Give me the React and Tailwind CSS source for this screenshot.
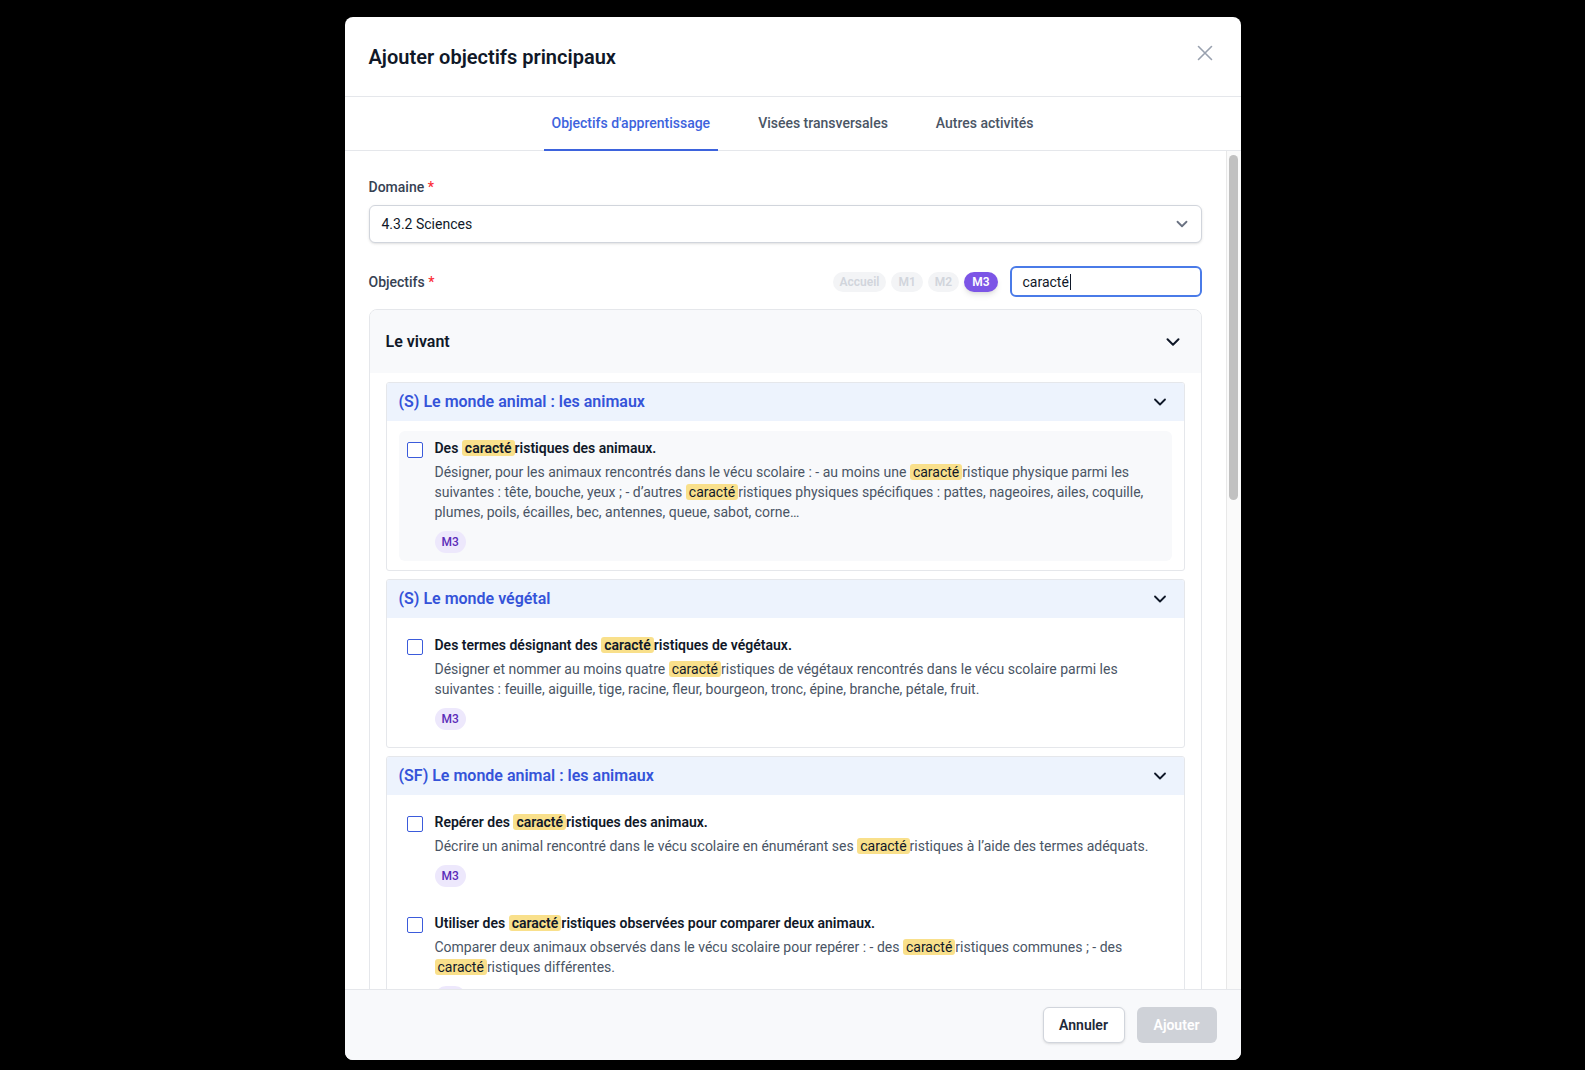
import { ChevronDown } from "lucide-react";

const SECTIONS = [
  {
    title: "(S) Le monde animal : les animaux",
    items: [
      {
        title: "Des caracté ristiques des animaux.",
        desc: "Désigner, pour les animaux rencontrés dans le vécu scolaire : - au moins une caracté ristique physique parmi les suivantes : tête, bouche, yeux ; - d’autres caracté ristiques physiques spécifiques : pattes, nageoires, ailes, coquille, plumes, poils, écailles, bec, antennes, queue, sabot, corne…",
        hover: true,
      },
    ],
  },
  {
    title: "(S) Le monde végétal",
    items: [
      {
        title: "Des termes désignant des caracté ristiques de végétaux.",
        desc: "Désigner et nommer au moins quatre caracté ristiques de végétaux rencontrés dans le vécu scolaire parmi les suivantes : feuille, aiguille, tige, racine, fleur, bourgeon, tronc, épine, branche, pétale, fruit.",
      },
    ],
  },
  {
    title: "(SF) Le monde animal : les animaux",
    items: [
      {
        title: "Repérer des caracté ristiques des animaux.",
        desc: "Décrire un animal rencontré dans le vécu scolaire en énumérant ses caracté ristiques à l’aide des termes adéquats.",
      },
      {
        title: "Utiliser des caracté ristiques observées pour comparer deux animaux.",
        desc: "Comparer deux animaux observés dans le vécu scolaire pour repérer : - des caracté ristiques communes ; - des caracté ristiques différentes.",
      },
    ],
  },
];

const LEVELS = ["Accueil", "M1", "M2", "M3"];

// splits on the search term and wraps each hit in a mark
function Highlighted({ text }) {
  const parts = text.split("caracté ");
  return parts.map((part, i) => (
    <span key={i}>
      {i > 0 ? (
        <mark className="rounded-[3px] bg-[#f9e08b] px-[3px] text-gray-900">caracté</mark>
      ) : null}
      {part}
    </span>
  ));
}

function Objective({ title, desc, hover }) {
  return (
    <div className={`flex gap-3 rounded-md px-2 pb-2 pt-[7px] ${hover ? "bg-[#f8f9fb]" : ""}`}>
      <span className="mt-1 h-4 w-4 shrink-0 rounded-[2px] border-[1.5px] border-[#3b5bdb] bg-white" />
      <div className="min-w-0 flex-1">
        <p className="text-sm font-semibold leading-5 text-gray-900">
          <Highlighted text={title} />
        </p>
        <p className="mt-1 text-sm leading-5 text-gray-600">
          <Highlighted text={desc} />
        </p>
        <div className="mt-[7px]">
          <span className="inline-flex h-[22px] items-center rounded-full bg-[#ede8fc] px-[7px] text-xs font-medium text-[#5b2bb8]">
            M3
          </span>
        </div>
      </div>
    </div>
  );
}

function Section({ title, items }) {
  return (
    <div className="overflow-hidden rounded-[3px] border border-gray-200 bg-white">
      <div className="flex h-[38px] items-center justify-between bg-[#edf3fd] pl-3 pr-[14px]">
        <span className="text-base font-semibold text-[#3553d9]">{title}</span>
        <ChevronDown size={20} strokeWidth={2.2} className="text-gray-900" />
      </div>
      <div className="space-y-[11px] px-3 pb-[9px] pt-2.5">
        {items.map((item, i) => (
          <Objective key={i} {...item} />
        ))}
      </div>
    </div>
  );
}

export default function App() {
  return (
    <div className="flex h-[1070px] w-full justify-center overflow-hidden bg-black font-[family-name:Roboto,'Noto_Sans',sans-serif]">
      <div className="mt-[17px] flex h-[1043px] w-[896px] flex-col overflow-hidden rounded-lg bg-white">
        <div className="flex h-[80px] shrink-0 items-center justify-between border-b border-gray-200 px-6">
          <h2 className="text-xl font-semibold text-gray-900">Ajouter objectifs principaux</h2>
          <button type="button" className="-mt-2 p-1 text-gray-400">
            <svg width="16" height="16" viewBox="0 0 16 16" fill="none" stroke="currentColor" strokeWidth="1.6" strokeLinecap="round">
              <path d="M1.5 1.5l13 13M14.5 1.5l-13 13" />
            </svg>
          </button>
        </div>

        <div className="flex h-[54px] shrink-0 justify-center gap-8 border-b border-gray-200">
          <button type="button" className="-mb-px border-b-2 border-[#3d63dd] px-2 text-sm font-medium text-[#3d63dd]">
            Objectifs d'apprentissage
          </button>
          <button type="button" className="-mb-px border-b-2 border-transparent px-2 text-sm font-medium text-gray-600">
            Visées transversales
          </button>
          <button type="button" className="-mb-px border-b-2 border-transparent px-2 text-sm font-medium text-gray-600">
            Autres activités
          </button>
        </div>

        <div className="flex min-h-0 flex-1">
          <div className="min-w-0 flex-1 overflow-hidden px-6 pt-[26px]">
            <label className="block text-sm font-medium leading-5 text-gray-700">
              Domaine <span className="text-red-500">*</span>
            </label>
            <div className="mt-2 flex h-[38px] items-center justify-between rounded-md border border-gray-300 bg-white pl-3 pr-[10px] shadow-sm">
              <span className="text-sm text-gray-900">4.3.2 Sciences</span>
              <ChevronDown size={18} strokeWidth={2.4} className="text-gray-500" />
            </div>

            <div className="mt-[23px] flex items-center justify-between">
              <label className="text-sm font-medium leading-5 text-gray-700">
                Objectifs <span className="text-red-500">*</span>
              </label>
              <div className="flex items-center gap-3">
                <div className="flex items-center gap-[5px]">
                  {LEVELS.map((lvl) =>
                    lvl === "M3" ? (
                      <span
                        key={lvl}
                        className="inline-flex h-5 items-center rounded-full bg-[#7c55e6] px-[8px] text-xs font-semibold text-white shadow-md"
                      >
                        {lvl}
                      </span>
                    ) : (
                      <span
                        key={lvl}
                        className="inline-flex h-5 items-center rounded-full bg-gray-100 px-[7px] text-xs font-semibold text-gray-300"
                      >
                        {lvl}
                      </span>
                    )
                  )}
                </div>
                <div className="flex h-[31px] w-[192px] items-center rounded-md border-2 border-[#4a7be8] px-[11px] text-sm text-gray-900">
                  caracté<span className="ml-px h-4 w-px bg-gray-900" />
                </div>
              </div>
            </div>

            <div className="mt-3 overflow-hidden rounded-lg border border-gray-200">
              <div className="flex h-[63px] items-center justify-between bg-[#f8f9fb] pl-4 pr-[17px]">
                <span className="text-base font-semibold text-gray-900">Le vivant</span>
                <ChevronDown size={22} strokeWidth={2.2} className="text-gray-900" />
              </div>
              <div className="space-y-2 px-4 pb-4 pt-[9px]">
                {SECTIONS.map((s, i) => (
                  <Section key={i} {...s} />
                ))}
              </div>
            </div>
          </div>

          <div className="w-[15px] shrink-0 border-l border-[#e8e8e8] bg-[#fafafa] pt-1">
            <div className="mx-auto h-[345px] w-[9px] rounded-full bg-[#c1c1c1]" />
          </div>
        </div>

        <div className="flex h-[71px] shrink-0 items-center justify-end gap-3 border-t border-gray-200 bg-[#f8f9fb] px-6">
          <button type="button" className="h-9 w-[82px] rounded-md border border-gray-300 bg-white text-sm font-semibold text-gray-800 shadow-sm">
            Annuler
          </button>
          <button type="button" className="h-9 w-[80px] rounded-md bg-[#cfd2d8] text-sm font-semibold text-white">
            Ajouter
          </button>
        </div>
      </div>
    </div>
  );
}
